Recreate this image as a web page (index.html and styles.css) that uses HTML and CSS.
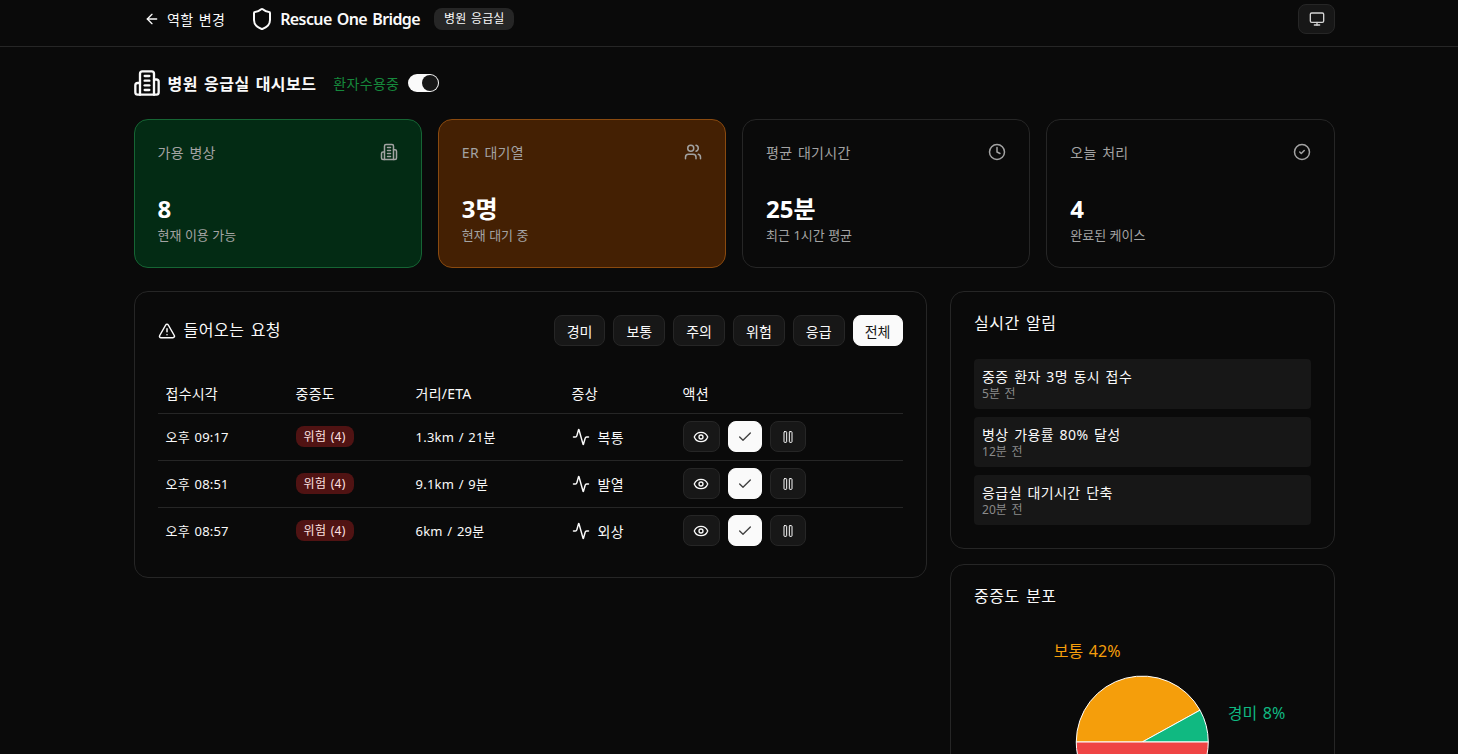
FILE: index.html
```html
<!DOCTYPE html>
<html lang="ko">

<head>
    <meta charset="UTF-8">
    <meta name="viewport" content="width=device-width, initial-scale=1.0">
    <link rel="stylesheet" href="styles.css">
    <title>Rescue One Bridge</title>
</head>

<body>
    <!-- Icon sprite -->
    <svg class="sprite" xmlns="http://www.w3.org/2000/svg">
        <symbol id="i-back" viewBox="0 0 24 24"><path d="m12 19-7-7 7-7"/><path d="M19 12H5"/></symbol>
        <symbol id="i-shield" viewBox="0 0 24 24"><path d="M20 13c0 5-3.5 7.5-7.66 8.95a1 1 0 0 1-.67-.01C7.5 20.5 4 18 4 13V6a1 1 0 0 1 1-1c2 0 4.5-1.2 6.24-2.72a1.17 1.17 0 0 1 1.52 0C14.51 3.81 17 5 19 5a1 1 0 0 1 1 1z"/></symbol>
        <symbol id="i-monitor" viewBox="0 0 24 24"><rect x="2" y="3" width="20" height="14" rx="2"/><line x1="8" y1="21" x2="16" y2="21"/><line x1="12" y1="17" x2="12" y2="21"/></symbol>
        <symbol id="i-building" viewBox="0 0 24 24"><path d="M6 22V4a2 2 0 0 1 2-2h8a2 2 0 0 1 2 2v18Z"/><path d="M6 12H4a2 2 0 0 0-2 2v6a2 2 0 0 0 2 2h2"/><path d="M18 9h2a2 2 0 0 1 2 2v9a2 2 0 0 1-2 2h-2"/><path d="M10 6h4"/><path d="M10 10h4"/><path d="M10 14h4"/><path d="M10 18h4"/></symbol>
        <symbol id="i-users" viewBox="0 0 24 24"><path d="M16 21v-2a4 4 0 0 0-4-4H6a4 4 0 0 0-4 4v2"/><circle cx="9" cy="7" r="4"/><path d="M22 21v-2a4 4 0 0 0-3-3.87"/><path d="M16 3.13a4 4 0 0 1 0 7.75"/></symbol>
        <symbol id="i-clock" viewBox="0 0 24 24"><circle cx="12" cy="12" r="10"/><polyline points="12 6 12 12 16 14"/></symbol>
        <symbol id="i-done" viewBox="0 0 24 24"><circle cx="12" cy="12" r="10"/><path d="m9 12 2 2 4-4"/></symbol>
        <symbol id="i-alert" viewBox="0 0 24 24"><path d="m21.73 18-8-14a2 2 0 0 0-3.48 0l-8 14A2 2 0 0 0 4 21h16a2 2 0 0 0 1.73-3"/><path d="M12 9v4"/><path d="M12 17h.01"/></symbol>
        <symbol id="i-activity" viewBox="0 0 24 24"><path d="M22 12h-2.48a2 2 0 0 0-1.93 1.46l-2.35 8.36a.25.25 0 0 1-.48 0L9.24 2.18a.25.25 0 0 0-.48 0l-2.35 8.36A2 2 0 0 1 4.49 12H2"/></symbol>
        <symbol id="i-eye" viewBox="0 0 24 24"><path d="M2.062 12.348a1 1 0 0 1 0-.696 10.75 10.75 0 0 1 19.876 0 1 1 0 0 1 0 .696 10.75 10.75 0 0 1-19.876 0"/><circle cx="12" cy="12" r="3"/></symbol>
        <symbol id="i-check" viewBox="0 0 24 24"><path d="M20 6 9 17l-5-5"/></symbol>
        <symbol id="i-pause" viewBox="0 0 24 24"><rect x="14" y="4" width="4" height="16" rx="1"/><rect x="6" y="4" width="4" height="16" rx="1"/></symbol>
    </svg>

    <header class="topbar">
        <div class="topbar-inner">
            <div class="topbar-left">
                <a class="back-link" href="#"><svg class="icon icon-16"><use href="#i-back"/></svg>역할 변경</a>
                <div class="brand">
                    <svg class="icon icon-24"><use href="#i-shield"/></svg>
                    <span class="brand-name">Rescue One Bridge</span>
                </div>
                <span class="role-tag">병원 응급실</span>
            </div>
            <button class="theme-btn"><svg class="icon icon-16"><use href="#i-monitor"/></svg></button>
        </div>
    </header>

    <main class="page">
        <div class="title-row">
            <svg class="icon icon-title"><use href="#i-building"/></svg>
            <h1>병원 응급실 대시보드</h1>
            <span class="status">환자수용중</span>
            <span class="switch"><span class="knob"></span></span>
        </div>

        <!-- Stat cards -->
        <section class="stats">
            <div class="stat stat-green">
                <div class="stat-head"><span>가용 병상</span><svg class="icon icon-18"><use href="#i-building"/></svg></div>
                <div class="stat-value">8</div>
                <div class="stat-note">현재 이용 가능</div>
            </div>
            <div class="stat stat-orange">
                <div class="stat-head"><span>ER 대기열</span><svg class="icon icon-18"><use href="#i-users"/></svg></div>
                <div class="stat-value">3명</div>
                <div class="stat-note">현재 대기 중</div>
            </div>
            <div class="stat">
                <div class="stat-head"><span>평균 대기시간</span><svg class="icon icon-18"><use href="#i-clock"/></svg></div>
                <div class="stat-value">25분</div>
                <div class="stat-note">최근 1시간 평균</div>
            </div>
            <div class="stat">
                <div class="stat-head"><span>오늘 처리</span><svg class="icon icon-18"><use href="#i-done"/></svg></div>
                <div class="stat-value">4</div>
                <div class="stat-note">완료된 케이스</div>
            </div>
        </section>

        <div class="columns">
            <section class="card requests">
                <div class="requests-head">
                    <h2><svg class="icon icon-18"><use href="#i-alert"/></svg>들어오는 요청</h2>
                    <div class="filters">
                        <button class="filter">경미</button>
                        <button class="filter">보통</button>
                        <button class="filter">주의</button>
                        <button class="filter">위험</button>
                        <button class="filter">응급</button>
                        <button class="filter filter-active">전체</button>
                    </div>
                </div>
                <table class="req-table">
                    <thead>
                        <tr>
                            <th class="col-time">접수시각</th>
                            <th class="col-level">중증도</th>
                            <th class="col-eta">거리/ETA</th>
                            <th class="col-symptom">증상</th>
                            <th>액션</th>
                        </tr>
                    </thead>
                    <tbody>
                        <tr>
                            <td>오후 09:17</td>
                            <td><span class="badge">위험 (4)</span></td>
                            <td>1.3km / 21분</td>
                            <td><span class="symptom"><svg class="icon icon-18"><use href="#i-activity"/></svg>복통</span></td>
                            <td>
                                <div class="actions">
                                    <button class="act act-eye"><svg class="icon icon-16"><use href="#i-eye"/></svg></button>
                                    <button class="act act-ok"><svg class="icon icon-16"><use href="#i-check"/></svg></button>
                                    <button class="act act-pause"><svg class="icon icon-16"><use href="#i-pause"/></svg></button>
                                </div>
                            </td>
                        </tr>
                        <tr>
                            <td>오후 08:51</td>
                            <td><span class="badge">위험 (4)</span></td>
                            <td>9.1km / 9분</td>
                            <td><span class="symptom"><svg class="icon icon-18"><use href="#i-activity"/></svg>발열</span></td>
                            <td>
                                <div class="actions">
                                    <button class="act act-eye"><svg class="icon icon-16"><use href="#i-eye"/></svg></button>
                                    <button class="act act-ok"><svg class="icon icon-16"><use href="#i-check"/></svg></button>
                                    <button class="act act-pause"><svg class="icon icon-16"><use href="#i-pause"/></svg></button>
                                </div>
                            </td>
                        </tr>
                        <tr>
                            <td>오후 08:57</td>
                            <td><span class="badge">위험 (4)</span></td>
                            <td>6km / 29분</td>
                            <td><span class="symptom"><svg class="icon icon-18"><use href="#i-activity"/></svg>외상</span></td>
                            <td>
                                <div class="actions">
                                    <button class="act act-eye"><svg class="icon icon-16"><use href="#i-eye"/></svg></button>
                                    <button class="act act-ok"><svg class="icon icon-16"><use href="#i-check"/></svg></button>
                                    <button class="act act-pause"><svg class="icon icon-16"><use href="#i-pause"/></svg></button>
                                </div>
                            </td>
                        </tr>
                    </tbody>
                </table>
            </section>

            <aside class="side">
                <section class="card side-card">
                    <h3>실시간 알림</h3>
                    <div class="alerts">
                        <div class="alert-item"><p>중증 환자 3명 동시 접수</p><small>5분 전</small></div>
                        <div class="alert-item"><p>병상 가용률 80% 달성</p><small>12분 전</small></div>
                        <div class="alert-item"><p>응급실 대기시간 단축</p><small>20분 전</small></div>
                    </div>
                </section>
                <section class="card side-card">
                    <h3>중증도 분포</h3>
                    <!-- 경미 1, 보통 5, 위험 6 -->
                    <svg class="pie" viewBox="0 0 334 240" xmlns="http://www.w3.org/2000/svg">
                        <path class="slice" fill="#f59e0b" d="M167 124 L101 124 A66 66 0 0 1 224.8 92.2 Z"/>
                        <path class="slice" fill="#10b981" d="M167 124 L224.8 92.2 A66 66 0 0 1 233 124 Z"/>
                        <path class="slice" fill="#ef4444" d="M167 124 L233 124 A66 66 0 0 1 101 124 Z"/>
                        <text class="pie-label" x="78.5" y="39" fill="#f59e0b">보통 42%</text>
                        <text class="pie-label" x="252.5" y="101" fill="#10b981">경미 8%</text>
                    </svg>
                </section>
            </aside>
        </div>
    </main>
</body>

</html>
```

FILE: styles.css
```css
* {
    box-sizing: border-box;
}

html,
body {
    height: 100%;
    overflow: hidden;
}

body {
    margin: 0;
    background: #0a0a0a;
    color: #fafafa;
    font-family: 'Noto Sans', 'Noto Sans CJK KR', sans-serif;
    font-size: 14px;
    word-spacing: 1.5px;
}

h1,
h2,
h3,
p {
    margin: 0;
}

button {
    font-family: inherit;
    cursor: pointer;
}

.sprite {
    display: none;
}

.icon {
    display: block;
    flex: none;
    fill: none;
    stroke: currentColor;
    stroke-width: 2;
    stroke-linecap: round;
    stroke-linejoin: round;
}

.icon-16 {
    width: 16px;
    height: 16px;
}

.icon-18 {
    width: 18px;
    height: 18px;
}

.icon-24 {
    width: 24px;
    height: 24px;
}

.icon-title {
    width: 28px;
    height: 28px;
    margin-left: -1px;
}

/* Top bar */
.topbar {
    height: 47px;
    border-bottom: 1px solid #262626;
}

.topbar-inner {
    width: 1201px;
    margin-left: 134px;
    padding-top: 4px;
    display: flex;
    justify-content: space-between;
    align-items: flex-start;
}

.topbar-left {
    display: flex;
    align-items: center;
    height: 30px;
}

.back-link {
    display: flex;
    align-items: center;
    gap: 7px;
    margin-left: 10px;
    color: #fafafa;
    text-decoration: none;
    font-size: 14px;
    letter-spacing: 0.3px;
}

.brand {
    display: flex;
    align-items: center;
    gap: 6px;
    margin-left: 25px;
}

.brand-name {
    font-size: 16px;
    font-weight: 600;
    letter-spacing: -0.6px;
    word-spacing: 1.5px;
}

.role-tag {
    margin-left: 14px;
    padding: 0 10px;
    height: 22px;
    line-height: 21px;
    border-radius: 8px;
    background: #262626;
    font-size: 12px;
    letter-spacing: 0.1px;
}

.theme-btn {
    width: 37px;
    height: 30px;
    display: flex;
    align-items: center;
    justify-content: center;
    background: #171717;
    color: #d4d4d4;
    border: 1px solid #262626;
    border-radius: 8px;
}

/* Page */
.page {
    width: 1201px;
    margin-left: 133.6px;
}

.title-row {
    display: flex;
    align-items: center;
    height: 28px;
    margin-top: 22px;
}

.title-row h1 {
    margin-left: 7px;
    font-size: 16px;
    font-weight: 600;
    letter-spacing: 0.45px;
}

.status {
    margin-left: 17px;
    color: #16883c;
    font-size: 14px;
    letter-spacing: 0.3px;
}

.switch {
    display: flex;
    justify-content: flex-end;
    align-items: center;
    width: 31px;
    height: 18px;
    margin-left: 9px;
    padding: 1px;
    border-radius: 9px;
    background: #fafafa;
}

.knob {
    width: 16px;
    height: 16px;
    border-radius: 50%;
    background: #171717;
}

/* Stat cards */
.stats {
    display: grid;
    grid-template-columns: repeat(4, minmax(0, 1fr));
    gap: 16px;
    margin-top: 22px;
}

.stat {
    height: 149px;
    padding: 23px;
    background: #0a0a0a;
    border: 1px solid #262626;
    border-radius: 14px;
}

.stat-green {
    background: #032b14;
    border-color: #166534;
}

.stat-orange {
    background: #442003;
    border-color: #8a4a0f;
}

.stat-head {
    display: flex;
    justify-content: space-between;
    align-items: center;
    height: 18px;
    color: #a3a3a3;
    font-size: 14px;
    letter-spacing: 0.3px;
}

.stat-value {
    margin-top: 30px;
    height: 36px;
    line-height: 36px;
    font-size: 24px;
    font-weight: 700;
    color: #fff;
}

.stat-note {
    margin-top: -2px;
    color: #a3a3a3;
    font-size: 13px;
    word-spacing: 0;
}

/* Main columns */
.columns {
    display: grid;
    grid-template-columns: 793px minmax(0, 1fr);
    gap: 23.5px;
    margin-top: 23px;
    align-items: start;
}

.card {
    background: #0a0a0a;
    border: 1px solid #262626;
    border-radius: 14px;
}

.requests {
    height: 287px;
    padding: 23px;
}

.requests-head {
    display: flex;
    justify-content: space-between;
    align-items: center;
    height: 31px;
}

.requests-head h2 {
    display: flex;
    align-items: center;
    gap: 8px;
    font-size: 16px;
    line-height: 21px;
    font-weight: 400;
    letter-spacing: 0.5px;
}

.filters {
    display: flex;
    gap: 8px;
}

.filter {
    width: 51.8px;
    height: 31px;
    padding: 0;
    background: #171717;
    color: #fafafa;
    border: 1px solid #262626;
    border-radius: 8px;
    font-size: 14px;
}

.filter-active {
    width: 50px;
    background: #fafafa;
    color: #171717;
    border-color: #fafafa;
}

/* Request table */
.req-table {
    width: 100%;
    margin-top: 27px;
    border-collapse: collapse;
    font-size: 13px;
    letter-spacing: 0.2px;
    word-spacing: 1px;
}

.req-table th {
    height: 40px;
    padding: 0 8px;
    text-align: left;
    font-size: 14px;
    font-weight: 400;
    border-bottom: 1px solid #262626;
}

.req-table td {
    height: 47px;
    padding: 0 8px;
    border-bottom: 1px solid #262626;
}

.req-table tbody tr:last-child td {
    border-bottom: none;
}

.col-time {
    width: 130px;
}

.col-level {
    width: 120px;
}

.col-eta {
    width: 156px;
}

.col-symptom {
    width: 111px;
}

.badge {
    display: inline-block;
    padding: 1px 8px;
    line-height: 19px;
    border-radius: 8px;
    background: #501313;
    color: #fee2e2;
    font-size: 12px;
    letter-spacing: 0.3px;
}

.symptom {
    display: flex;
    align-items: center;
    gap: 8px;
    font-size: 14px;
}

.actions {
    display: flex;
    gap: 8px;
}

.act {
    display: flex;
    align-items: center;
    justify-content: center;
    height: 31px;
    padding: 0;
    background: #171717;
    color: #fafafa;
    border: 1px solid #262626;
    border-radius: 8px;
}

.act-eye {
    width: 37px;
}

.act-ok {
    width: 34px;
    background: #fafafa;
    border-color: #fafafa;
    color: #404040;
}

.act-pause {
    width: 36px;
}

.act-pause .icon {
    stroke-width: 1.5;
}

/* Right column */
.side {
    display: flex;
    flex-direction: column;
    gap: 15px;
}

.side-card {
    padding: 20px 23px 23px;
}

.side-card h3 {
    font-size: 16px;
    line-height: 22px;
    font-weight: 400;
    letter-spacing: 0.5px;
}

.alerts {
    display: flex;
    flex-direction: column;
    gap: 8px;
    margin-top: 25px;
}

.alert-item {
    height: 50px;
    padding: 8px;
    background: #171717;
    border-radius: 4px;
}

.alert-item p {
    font-size: 14px;
    line-height: 19px;
    letter-spacing: 0.4px;
}

.alert-item small {
    display: block;
    color: #8a8a8a;
    font-size: 12px;
    line-height: 16px;
}

.pie {
    display: block;
    width: 100%;
    height: 240px;
    margin-top: 11px;
}

.slice {
    stroke: #fff;
    stroke-width: 1;
}

.pie-label {
    font-size: 16px;
}
```
